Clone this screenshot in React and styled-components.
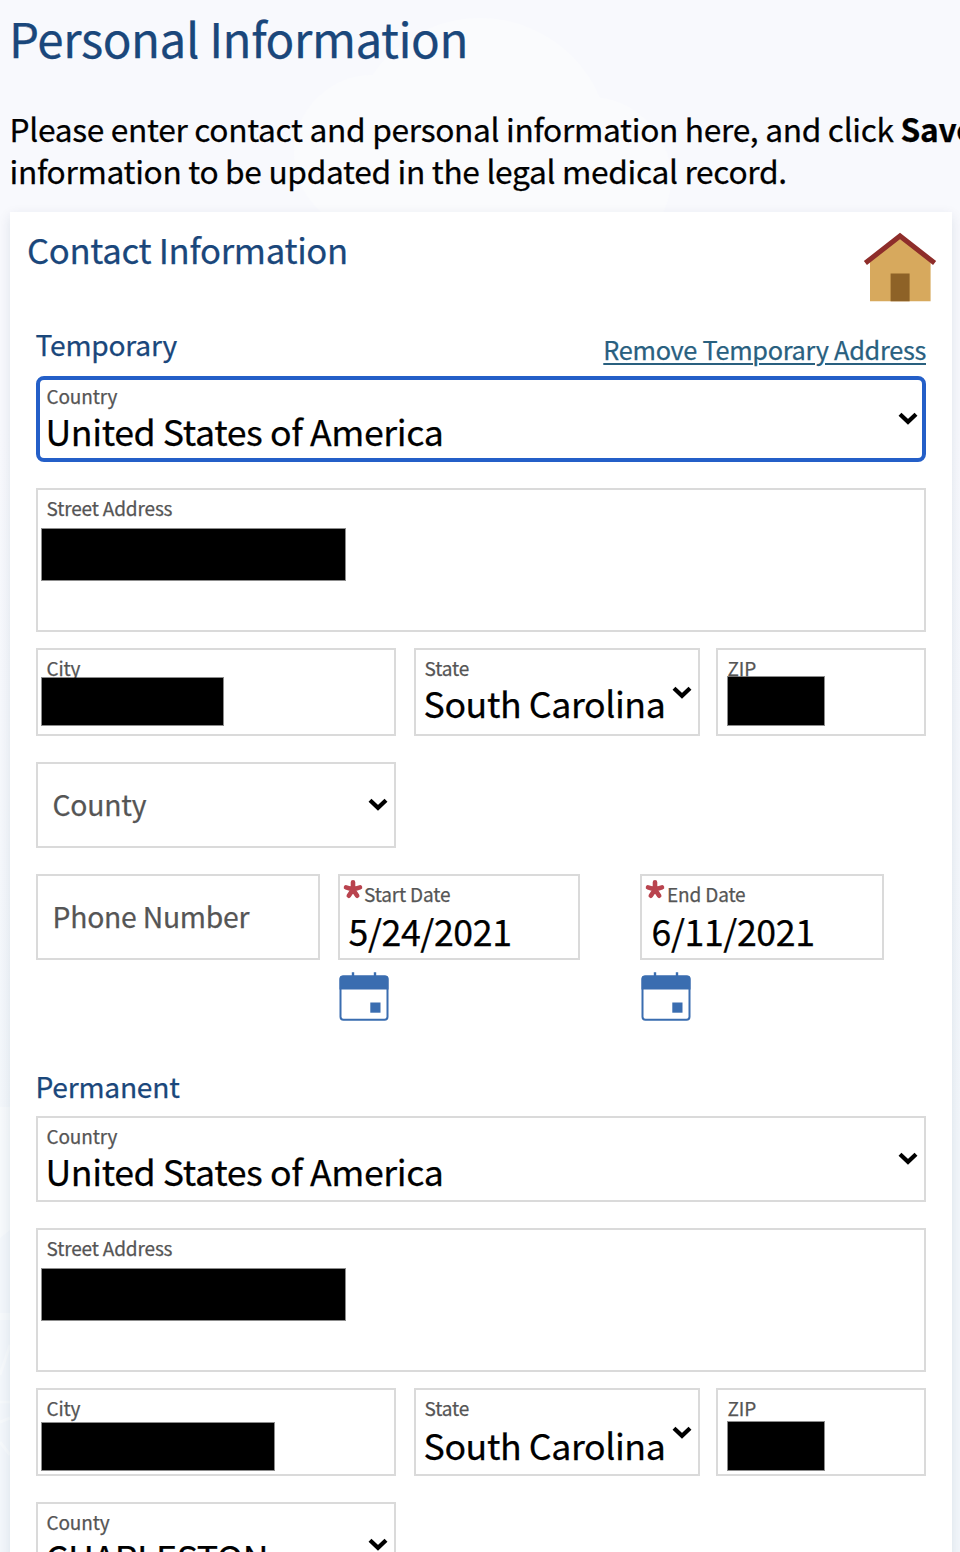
import React from "react";
import styled, { createGlobalStyle, css } from "styled-components";

const GlobalStyle = createGlobalStyle`
  *, *::before, *::after { box-sizing: border-box; }
  html, body { margin: 0; padding: 0; }
  body {
    width: 960px;
    height: 1552px;
    overflow: hidden;
    background: linear-gradient(#f8f9fd 0, #f8f9fd 420px, #f3f7fb 1150px);
    color: #000;
    font-family: "Noto Sans CJK SC", "Source Sans Pro", "Noto Sans", sans-serif;
    -webkit-text-stroke: 0.25px currentColor;
  }
  h1, h2, h3, p { margin: 0; font-weight: 400; }
`;

const Page = styled.main`
  position: relative;
  width: 960px;
  height: 1552px;
  overflow: hidden;
  padding: 11px 8px 0 10px;
`;

const Backdrop = styled.svg`
  position: absolute;
  top: 0;
  left: 0;
  z-index: -1;
`;

const Title = styled.h1`
  height: 96px;
  margin-left: -1px;
  color: #1a477b;
  font-size: 47.5px;
  line-height: 54px;
  letter-spacing: -0.0095em;
`;

const Intro = styled.p`
  height: 105px;
  width: 1300px;
  margin-left: -0.5px;
  font-size: 31.7px;
  line-height: 42px;
  letter-spacing: -0.0098em;
  white-space: nowrap;

  b { font-weight: 700; }
`;

const Card = styled.section`
  width: 942px;
  height: 1400px;
  padding: 12px 26px 0;
  background: #fff;
  box-shadow: 0 4px 12px rgba(20, 50, 80, 0.11);
`;

const CardHeader = styled.header`
  display: flex;
  justify-content: space-between;
  align-items: flex-start;
  height: 92px;
  margin: 0 -11px 0 -9px;
`;

const CardTitle = styled.h2`
  color: #1a477b;
  font-size: 34.7px;
  line-height: 50px;
  letter-spacing: -0.009em;
`;

const HouseSvg = styled.svg`
  margin-top: 8px;
`;

const AddressHeader = styled.div`
  display: flex;
  justify-content: space-between;
  height: ${(p) => p.$height}px;
`;

const AddressTitle = styled.h3`
  margin-left: -0.5px;
  color: #1a477b;
  font-size: 28.2px;
  line-height: 56px;
  letter-spacing: -0.0085em;
`;

const RemoveLink = styled.a`
  color: #29607f;
  font-size: 25.3px;
  line-height: 66px;
  letter-spacing: -0.0115em;
  text-decoration: underline;
  text-decoration-thickness: 2px;
  text-underline-offset: 3px;
`;

const Row = styled.div`
  display: flex;
  margin-bottom: ${(p) => p.$gap ?? 26}px;
`;

const Column = styled.div`
  width: ${(p) => p.$width}px;
  margin-left: ${(p) => p.$before ?? 0}px;
`;

const Field = styled.div`
  position: relative;
  width: 100%;
  height: ${(p) => p.$height ?? 86}px;
  padding: 6px 8px 0 8.5px;
  border: 2px solid #dadada;
  background: #fff;
  ${(p) =>
    p.$focused &&
    css`
      padding: 4px 6px 0 6.5px;
      border: 4px solid #245fc8;
      border-radius: 8px;
    `}
`;

const Label = styled.div`
  height: 24px;
  padding-left: ${(p) => p.$indent ?? 0}px;
  color: #555;
  font-size: 19px;
  line-height: 24px;
  letter-spacing: -0.008em;
  white-space: nowrap;
`;

const Value = styled.div`
  margin-top: ${(p) => p.$shift ?? 1}px;
  margin-left: -1px;
  padding-left: ${(p) => p.$indent ?? 0}px;
  font-size: 35.7px;
  line-height: 44px;
  letter-spacing: -0.011em;
  white-space: nowrap;
`;

const Placeholder = styled.div`
  padding-left: 6px;
  color: #555;
  font-size: 28.3px;
  line-height: 68px;
  letter-spacing: -0.008em;
  white-space: nowrap;
`;

const ChevronSvg = styled.svg`
  position: absolute;
  right: ${(p) => p.$right}px;
  top: ${(p) => p.$top}px;
`;

const Asterisk = styled.svg`
  position: absolute;
  left: 3px;
  top: 4px;
`;

const Redaction = styled.span`
  position: absolute;
  left: ${(p) => p.$left}px;
  top: ${(p) => p.$top}px;
  width: ${(p) => p.$width}px;
  height: ${(p) => p.$height}px;
  background: #000;
  outline: 1px solid rgba(0, 0, 0, 0.45);
`;

const CalendarSvg = styled.svg`
  display: block;
  margin: 11px 0 0 1px;
`;

function Chevron({ right, top }) {
  return (
    <ChevronSvg $right={right} $top={top} width="20" height="14" viewBox="0 0 20 14">
      <path d="M2 2.200 L10 9.800 L18 2.200" fill="none" stroke="#000" strokeWidth="4.200" />
    </ChevronSvg>
  );
}

function House() {
  return (
    <HouseSvg width="74" height="72" viewBox="0 0 74 72">
      <path d="M7 28 L37 5 L67.600 28 V69.300 H7Z" fill="#d7a95d" />
      <rect x="27.600" y="41.500" width="19" height="27.800" fill="#8e6227" />
      <path d="M2.400 31 L37 4 L71.600 31" fill="none" stroke="#8e2d2a" strokeWidth="5" />
    </HouseSvg>
  );
}

function Calendar() {
  return (
    <CalendarSvg width="51" height="51" viewBox="0 0 51 51">
      <path d="M14 1.200 V7 M36 1.200 V7" stroke="#3a6db0" strokeWidth="2.400" />
      <rect x="1.500" y="5.500" width="47" height="43.300" rx="3" fill="#fff" stroke="#3a6db0" strokeWidth="2" />
      <path d="M0.500 18.500 V7.800 Q0.500 4.500 4 4.500 H46 Q49.500 4.500 49.500 7.800 V18.500Z" fill="#3a6db0" />
      <rect x="31.300" y="31.500" width="10.200" height="10.200" fill="#3a6db0" />
    </CalendarSvg>
  );
}

function SelectField({ label, value, placeholder, focused, height, right = 6, top = 34, shift }) {
  const inset = focused ? 2 : 0;
  return (
    <Field $focused={focused} $height={height}>
      {placeholder ? (
        <Placeholder>{placeholder}</Placeholder>
      ) : (
        <>
          <Label>{label}</Label>
          <Value $shift={shift}>{value}</Value>
        </>
      )}
      <Chevron right={right - inset} top={top - inset} />
    </Field>
  );
}

function HiddenField({ label, indent, height, box }) {
  return (
    <Field $height={height}>
      <Label $indent={indent}>{label}</Label>
      <Redaction $left={box[0]} $top={box[1]} $width={box[2]} $height={box[3]} />
    </Field>
  );
}

function DateField({ label, labelIndent, value, indent }) {
  return (
    <>
      <Field>
        <Asterisk width="20" height="20" viewBox="0 0 20 20">
          <path
            d="M10 9.500 V2.300 M10 9.500 L3 7.400 M10 9.500 L17 7.400 M10 9.500 L5.800 15.700 M10 9.500 L14.200 15.700"
            stroke="#b9434e"
            strokeWidth="4.600"
            strokeLinecap="round"
          />
        </Asterisk>
        <Label $indent={labelIndent}>{label}</Label>
        <Value $shift={3} $indent={indent}>
          {value}
        </Value>
      </Field>
      <Calendar />
    </>
  );
}

function AddressFields({ focused, city, zip, stateShift }) {
  return (
    <>
      <Row>
        <SelectField label="Country" value="United States of America" focused={focused} />
      </Row>
      <Row $gap={16}>
        <HiddenField label="Street Address" height={144} box={[4, 39, 303, 51]} />
      </Row>
      <Row>
        <Column $width={360}>
          <HiddenField label="City" height={88} box={city} />
        </Column>
        <Column $width={286} $before={18}>
          <SelectField label="State" value="South Carolina" height={88} top={36} shift={stateShift} />
        </Column>
        <Column $width={210} $before={16}>
          <HiddenField label="ZIP" indent={1} height={88} box={zip} />
        </Column>
      </Row>
    </>
  );
}

export default function App() {
  return (
    <>
      <GlobalStyle />
      <Page>
        <Backdrop width="960" height="1552">
          <g fill="#fafbfd">
            <circle cx="480" cy="148" r="130" />
            <circle cx="372" cy="153" r="78" />
            <circle cx="590" cy="178" r="81" />
            <path d="M0 1107 H10 V1230 L0 1238Z" opacity="0.6" />
            <path d="M0 1313 H10 V1320 H0Z" opacity="0.6" />
          </g>
          <path
            d="M0 1375 L10 1345 M0 1402 H10 M0 1422 L10 1418 M0 1442 L10 1455"
            stroke="#fafcfe"
            strokeWidth="3"
            opacity="0.6"
          />
        </Backdrop>
        <Title>Personal Information</Title>
        <Intro>
          Please enter contact and personal information here, and click <b>Save</b>
          <br />
          information to be updated in the legal medical record.
        </Intro>
        <Card>
          <CardHeader>
            <CardTitle>Contact Information</CardTitle>
            <House />
          </CardHeader>

          <AddressHeader $height={60}>
            <AddressTitle>Temporary</AddressTitle>
            <RemoveLink>Remove Temporary Address</RemoveLink>
          </AddressHeader>
          <AddressFields focused city={[4, 28, 181, 47]} zip={[10, 27, 96, 48]} stateShift={1} />
          <Row>
            <Column $width={360}>
              <SelectField placeholder="County" />
            </Column>
          </Row>
          <Row $gap={36}>
            <Column $width={284}>
              <Field>
                <Placeholder>Phone Number</Placeholder>
              </Field>
            </Column>
            <Column $width={242} $before={18}>
              <DateField label="Start Date" labelIndent={15.5} value="5/24/2021" indent={1} />
            </Column>
            <Column $width={244} $before={60}>
              <DateField label="End Date" labelIndent={16.5} value="6/11/2021" indent={2} />
            </Column>
          </Row>

          <AddressHeader $height={58}>
            <AddressTitle>Permanent</AddressTitle>
          </AddressHeader>
          <AddressFields city={[4, 33, 232, 47]} zip={[10, 32, 96, 48]} stateShift={3} />
          <Row>
            <Column $width={360}>
              <SelectField label="County" value="CHARLESTON" />
            </Column>
          </Row>
        </Card>
      </Page>
    </>
  );
}
